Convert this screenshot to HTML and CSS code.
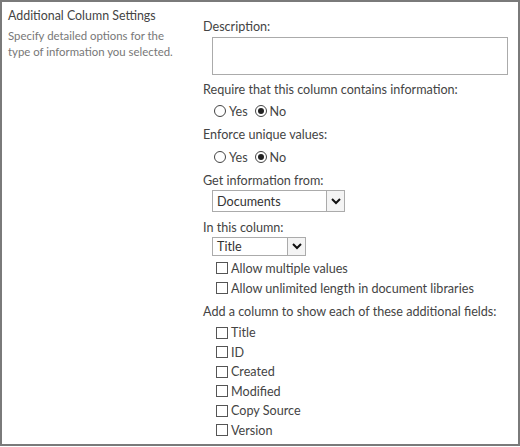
FILE: index.html
```html
<!DOCTYPE html>
<html>
<head>
<meta charset="utf-8">
<link rel="stylesheet" href="styles.css">
</head>
<body>
<div class="frame">
  <div class="side">
    <div class="side-title">Additional Column Settings</div>
    <div class="side-desc">Specify detailed options for the type of information you selected.</div>
  </div>
  <div class="main">
    <div class="label l-desc">Description:</div>
    <div class="textarea"></div>

    <div class="label l-req">Require that this column contains information:</div>
    <div class="radios r-req">
      <span class="radio"></span><span class="rtext">Yes</span>
      <span class="radio checked"></span><span class="rtext">No</span>
    </div>

    <div class="label l-uniq">Enforce unique values:</div>
    <div class="radios r-uniq">
      <span class="radio"></span><span class="rtext">Yes</span>
      <span class="radio checked"></span><span class="rtext">No</span>
    </div>

    <div class="label l-get">Get information from:</div>
    <div class="select sel-docs">
      <span class="sel-text">Documents</span>
      <span class="sel-btn"><svg width="10" height="7" viewBox="0 0 10 7"><polyline points="1,1 5,5 9,1" fill="none" stroke="#111" stroke-width="2"/></svg></span>
    </div>

    <div class="label l-col">In this column:</div>
    <div class="select sel-title">
      <span class="sel-text">Title</span>
      <span class="sel-btn"><svg width="10" height="7" viewBox="0 0 10 7"><polyline points="1,1 5,5 9,1" fill="none" stroke="#111" stroke-width="2"/></svg></span>
    </div>
    <div class="checks c-opts">
      <div class="check"><span class="box"></span><span>Allow multiple values</span></div>
      <div class="check"><span class="box"></span><span>Allow unlimited length in document libraries</span></div>
    </div>

    <div class="label l-add">Add a column to show each of these additional fields:</div>
    <div class="checks c-fields">
      <div class="check f"><span class="box"></span><span>Title</span></div>
      <div class="check f"><span class="box"></span><span>ID</span></div>
      <div class="check f"><span class="box"></span><span>Created</span></div>
      <div class="check f"><span class="box"></span><span>Modified</span></div>
      <div class="check f"><span class="box"></span><span>Copy Source</span></div>
      <div class="check f"><span class="box"></span><span>Version</span></div>
    </div>
  </div>
</div>
</body>
</html>
```

FILE: styles.css
```css
html, body {
  margin: 0;
  padding: 0;
  background: #fff;
}

.frame {
  width: 520px;
  height: 446px;
  box-sizing: border-box;
  border: 2px solid #7a7a7a;
  display: flex;
  font-family: Lato, "Liberation Sans", sans-serif;
  font-size: 12.6px;
  color: #444;
}

.side {
  width: 195px;
  padding-left: 6px;
  padding-top: 6px;
  flex: none;
}

.side-title {
  font-size: 12.4px;
  line-height: 16px;
  color: #444;
}

.side-desc {
  margin-top: 4px;
  width: 168px;
  font-size: 11.4px;
  line-height: 16px;
  color: #777;
}

.main {
  flex: 1;
  padding-top: 16px;
}

.label {
  line-height: 18px;
  height: 18px;
  white-space: nowrap;
}

.textarea {
  margin-top: 1px;
  margin-left: 9px;
  width: 296px;
  height: 38px;
  box-sizing: border-box;
  border: 1px solid #ababab;
}

.l-req { margin-top: 6px; }

.radios {
  display: flex;
  align-items: center;
  height: 24px;
  margin-left: 11px;
}

.r-uniq { margin-top: 1px; }

.radio {
  width: 12px;
  height: 12px;
  box-sizing: border-box;
  border: 1px solid #444;
  border-radius: 50%;
  position: relative;
  flex: none;
}

.radio.checked::after {
  content: "";
  position: absolute;
  left: 2px;
  top: 2px;
  width: 6px;
  height: 6px;
  border-radius: 50%;
  background: #222;
}

.rtext {
  margin-left: 3px;
  margin-right: 7px;
}

.l-uniq { margin-top: 3px; }
.l-get { margin-top: 3px; }

.select {
  display: flex;
  margin-left: 9px;
  box-sizing: border-box;
  border: 1px solid #ababab;
  background: #fff;
}

.sel-docs {
  width: 133px;
  height: 22px;
}

.sel-title {
  width: 94px;
  height: 19px;
}

.sel-text {
  flex: 1;
  padding-left: 4px;
  color: #333;
  display: flex;
  align-items: center;
}

.sel-btn {
  width: 18px;
  flex: none;
  box-sizing: border-box;
  border-left: 1px solid #ababab;
  background: #f4f4f4;
  display: flex;
  align-items: center;
  justify-content: center;
}

.l-col { margin-top: 7px; }

.checks {
  margin-left: 13px;
}

.c-opts { margin-top: 2px; }

.check {
  display: flex;
  align-items: center;
  height: 20px;
  white-space: nowrap;
}

.check.f {
  height: 19.5px;
}

.box {
  width: 12px;
  height: 12px;
  box-sizing: border-box;
  border: 1px solid #555;
  background: #fff;
  margin-right: 3px;
  flex: none;
}

.l-add { margin-top: 5px; }
.c-fields { margin-top: 2px; }
```
